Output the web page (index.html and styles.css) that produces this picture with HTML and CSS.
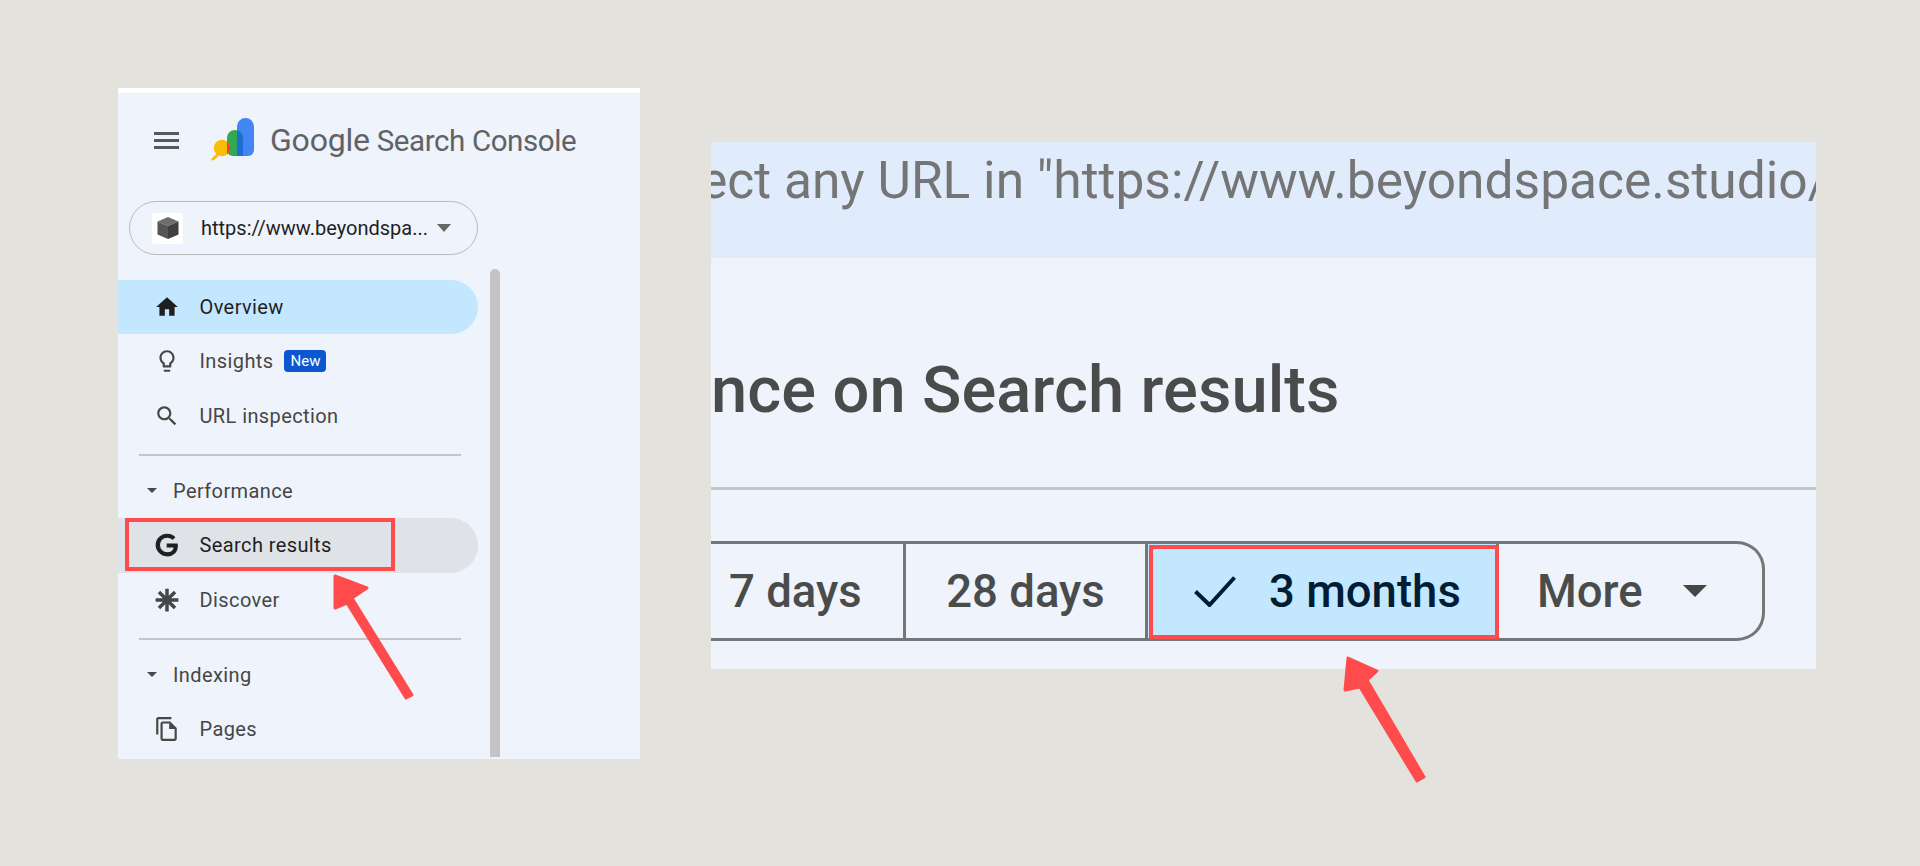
FILE: index.html
```html
<!DOCTYPE html>
<html lang="en">
<head>
	<meta charset="UTF-8">
	<title>Google Search Console</title>
	<link rel="stylesheet" href="styles.css">
</head>
<body>
	<div class="stage">
		<!-- sidebar crop -->
		<div class="side">
			<div class="brand">
				<svg class="burger" viewBox="0 0 25 17"><rect width="25" height="3" fill="#55595c"/><rect y="7" width="25" height="3" fill="#55595c"/><rect y="14" width="25" height="3" fill="#55595c"/></svg>
				<svg class="logo" viewBox="0 0 44 44">
					<path d="M26 8.500a8.500 8.500 0 0 1 17 0V32a6 6 0 0 1-6 6H26z" fill="#4285f4"/>
					<path d="M16 20a8 8 0 0 1 16 0v18H22a6 6 0 0 1-6-6z" fill="#34a853"/>
					<path d="M26 12.500a8 8 0 0 1 6 7.500v18h-6z" fill="#1a6fd6"/>
					<circle cx="11" cy="30" r="8.200" fill="#fbbc04"/>
					<path d="M16 23.500a8.200 8.200 0 0 1 0 13z" fill="#ea4335"/>
					<path d="M2 41l5.500-5" stroke="#fbbc04" stroke-width="3" stroke-linecap="round"/>
				</svg>
				<span class="brand-name"><span class="brand-google">Google</span> Search Console</span>
			</div>
			<div class="property">
				<span class="favicon">
					<svg viewBox="0 0 24 24" width="24" height="24">
						<path d="M12 1l10.500 4.500L12 10 1.500 5.500z" fill="#6e6e6e"/>
						<path d="M1.500 5.500L12 10v13L1.500 18.500z" fill="#555"/>
						<path d="M22.500 5.500L12 10v13l10.500-4.500z" fill="#404040"/>
					</svg>
				</span>
				<span class="property-url">https://www.beyondspa...</span>
				<span class="caret caret-prop"></span>
			</div>
			<div class="nav-wrap">
				<div class="nav">
					<div class="row active">
						<svg class="ico" viewBox="0 0 24 24"><path d="M10 20v-6h4v6h5v-8h3L12 3 2 12h3v8z"/></svg>
						<span>Overview</span>
					</div>
					<div class="row">
						<svg class="ico" viewBox="0 0 24 24"><path d="M9 21c0 .55.45 1 1 1h4c.55 0 1-.45 1-1v-1H9v1zm3-19C8.140 2 5 5.140 5 9c0 2.380 1.190 4.470 3 5.740V17c0 .55.45 1 1 1h6c.55 0 1-.45 1-1v-2.260c1.810-1.270 3-3.360 3-5.740 0-3.860-3.140-7-7-7zm2.850 11.100l-.85.6V16h-4v-2.300l-.85-.6C7.800 12.160 7 10.630 7 9c0-2.760 2.240-5 5-5s5 2.240 5 5c0 1.630-.8 3.160-2.150 4.100z"/></svg>
						<span>Insights</span>
						<span class="badge">New</span>
					</div>
					<div class="row">
						<svg class="ico" viewBox="0 0 24 24"><path d="M15.500 14h-.79l-.28-.27C15.410 12.590 16 11.110 16 9.500 16 5.910 13.090 3 9.500 3S3 5.910 3 9.500 5.910 16 9.500 16c1.610 0 3.090-.59 4.230-1.570l.27.28v.79l5 4.990L20.490 19l-4.990-5zm-6 0C7.010 14 5 11.990 5 9.500S7.010 5 9.500 5 14 7.010 14 9.500 11.990 14 9.500 14z"/></svg>
						<span>URL inspection</span>
					</div>
					<div class="sep"></div>
					<div class="group"><span class="caret"></span><span>Performance</span></div>
					<div class="row current">
						<svg class="ico ico-g" viewBox="0 0 24 24"><path d="M21.350 11.100h-9.170v2.730h6.510c-.33 3.810-3.500 5.440-6.500 5.440C8.360 19.270 5 16.250 5 12c0-4.100 3.200-7.270 7.200-7.270 3.090 0 4.900 1.970 4.900 1.970L19 4.720S16.560 2 12.100 2C6.420 2 2 6.800 2 12c0 5.050 4.160 10 10.250 10 5.370 0 9.250-3.670 9.250-9.090 0-1.150-.15-1.810-.15-1.810z"/></svg>
						<span>Search results</span>
						<div class="redbox redbox-side"></div>
					</div>
					<div class="row">
						<svg class="ico ico-big" viewBox="0 0 24 24"><path d="M12 1.500v21M1.500 12h21M4.600 4.600l14.800 14.800M19.400 4.600L4.600 19.400" stroke="#444746" stroke-width="3.200"/></svg>
						<span>Discover</span>
					</div>
					<div class="sep"></div>
					<div class="group"><span class="caret"></span><span>Indexing</span></div>
					<div class="row">
						<svg class="ico" viewBox="0 0 24 24"><path d="M16 1H4c-1.100 0-2 .9-2 2v14h2V3h12V1zm-1 4H8c-1.100 0-1.990.9-1.990 2L6 21c0 1.100.89 2 1.990 2H19c1.100 0 2-.9 2-2V11l-6-6zM8 21V7h6v5h5v9H8z"/></svg>
						<span>Pages</span>
					</div>
				</div>
				<div class="scrollbar"></div>
			</div>
		</div>

		<!-- main content crop -->
		<div class="main">
			<div class="banner">ect any URL in "https://www.beyondspace.studio/</div>
			<h1 class="title">nce on Search results</h1>
			<div class="rule"></div>
			<div class="range">
				<div class="cell cell-7">7 days</div>
				<div class="cell cell-28">28 days</div>
				<div class="cell cell-3m">
					<svg class="check" viewBox="0 0 42 31"><path d="M1.500 15.500l14 13.500L40.500 1.500" fill="none" stroke="#001d35" stroke-width="4"/></svg>
					<span>3 months</span>
					<div class="redbox redbox-main"></div>
				</div>
				<div class="cell cell-more"><span>More</span><span class="caret caret-more"></span></div>
			</div>
		</div>
	</div>

	<!-- red annotation arrows, they run across the crops and the background -->
	<svg class="arrows" viewBox="0 0 1920 866" width="1920" height="866">
		<path d="M335 576L367 588 352 598 412 695 406 698 347 603 335 608z" fill="#ff4b4b" stroke="#ff4b4b" stroke-width="3" stroke-linejoin="round"/>
		<path d="M1348 658L1377 671 1367 680 1424 777 1417 781 1360 687 1345 690z" fill="#ff4b4b" stroke="#ff4b4b" stroke-width="3" stroke-linejoin="round"/>
	</svg>
</body>
</html>
```

FILE: styles.css
```css
*{margin:0;padding:0;box-sizing:border-box;}
body{background:#e3e2dc;font-family:Roboto,"Liberation Sans",sans-serif;height:866px;overflow:hidden;position:relative;}
.stage{display:flex;align-items:flex-start;gap:71px;padding:88px 0 0 118px;}

/* sidebar */
.side{width:522px;height:671px;background:#eff3fb;border-top:5px solid #fff;overflow:hidden;}
.brand{display:flex;align-items:center;height:94px;padding-left:36px;}
.burger{width:25px;height:17px;margin-right:32px;}
.logo{width:44px;height:44px;margin-right:15px;}
.brand-name{font-size:29.5px;color:#5f6368;letter-spacing:-.4px;white-space:nowrap;}
.brand-google{font-size:32px;letter-spacing:-.2px;}
.property{display:flex;align-items:center;width:349px;height:54px;margin:14px 0 0 11px;border:1px solid #b9bcbd;border-radius:27px;padding-left:22px;}
.favicon{display:flex;align-items:center;justify-content:center;width:31px;height:31px;background:#fff;border-radius:2px;margin-right:18px;}
.property-url{font-size:20px;color:#1f1f1f;white-space:nowrap;width:236px;}
.caret{display:block;width:0;height:0;border-left:5px solid transparent;border-right:5px solid transparent;border-top:5px solid #444746;}
.caret-prop{border-left-width:7px;border-right-width:7px;border-top:8px solid #666;}

.nav-wrap{display:flex;align-items:stretch;margin-top:14px;}
.nav{width:360px;padding-top:10.5px;}
.row{position:relative;display:flex;align-items:center;height:54.5px;padding-left:35.5px;font-size:20px;letter-spacing:.4px;color:#444746;border-radius:0 28px 28px 0;}
.row .ico{margin-right:20px;}
.ico{width:26px;height:26px;fill:#444746;flex:none;}
.ico-big{fill:none;}
.active{background:#c2e7ff;color:#1f1f1f;}
.active .ico{fill:#1f1f1f;}
.current{background:#dfe3e7;color:#1f1f1f;}
.current .ico{fill:#1f1f1f;}
.current .ico-g{stroke:#1f1f1f;stroke-width:1;}
.badge{background:#0b57d0;color:#fff;font-size:15px;letter-spacing:0;border-radius:4px;padding:0 6px;height:22px;line-height:22px;margin-left:11px;}
.sep{height:1.500px;background:#c4c7c5;margin:11px 17px 8px 21px;}
.group{display:flex;align-items:center;height:54.5px;padding-left:29px;font-size:20px;letter-spacing:.4px;color:#444746;}
.group .caret{margin-right:16px;}
.scrollbar{width:10px;margin-left:12px;background:#c4c4c4;border-radius:5px 5px 0 0;}

/* main */
.main{width:1105px;height:527px;margin-top:54px;background:#eff3fb;overflow:hidden;}
.banner{height:116px;background:#e0ebfc;color:#757575;font-size:51.5px;line-height:78px;white-space:nowrap;text-indent:-11px;overflow:hidden;}
.title{font-size:65px;font-weight:500;letter-spacing:.1px;color:#4a4c4c;line-height:80px;padding-top:92px;white-space:nowrap;}
.rule{height:3px;background:#c4c7c5;margin-top:57px;}
.range{display:flex;width:1054px;height:100px;margin-top:51px;border:3px solid #747775;border-left:0;border-radius:0 28px 28px 0;font-size:45.5px;font-weight:500;color:#4a4c4c;}
.cell{display:flex;align-items:center;position:relative;height:100%;border-right:3px solid #747775;white-space:nowrap;}
.cell-7{width:195px;padding-left:18px;}
.cell-28{width:242px;justify-content:center;}
.cell-3m{width:351px;background:#c2e7ff;color:#001d35;padding-left:46px;}
.check{width:42px;height:31px;margin-right:33px;}
.cell-more{flex:1;border-right:0;padding-left:38px;}
.caret-more{margin-left:40px;border-left-width:12px;border-right-width:12px;border-top:12px solid #444746;}

/* red highlight boxes */
.redbox{position:absolute;border:4px solid #ff4b4b;}
.redbox-side{left:7px;top:0;width:270px;height:53px;}
.redbox-main{left:1px;top:1px;right:-3px;bottom:-1px;}
.arrows{position:absolute;left:0;top:0;pointer-events:none;}
```
